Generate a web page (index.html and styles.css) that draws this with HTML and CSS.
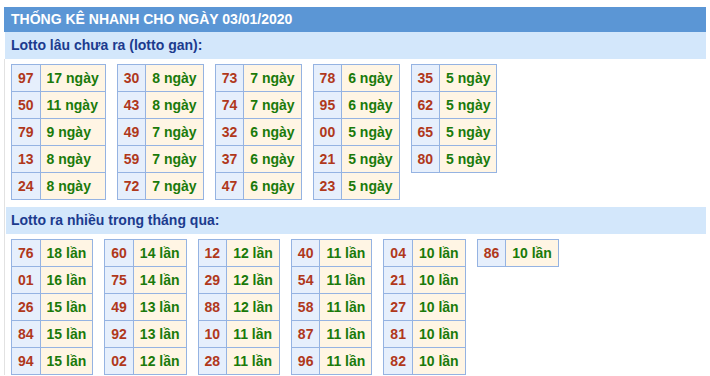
FILE: index.html
```html
<!DOCTYPE html>
<html lang="vi">
<head>
<meta charset="utf-8">
<title>Thống kê nhanh</title>
<link rel="stylesheet" href="styles.css">
</head>
<body>
<div class="box">
  <div class="title">THỐNG KÊ NHANH CHO NGÀY 03/01/2020</div>
  <div class="sub first">Lotto lâu chưa ra (lotto gan):</div>
  <div class="body">
    <div class="tables">
      <table><tr><td class="n">97</td><td class="v">17 ngày</td></tr><tr><td class="n">50</td><td class="v">11 ngày</td></tr><tr><td class="n">79</td><td class="v">9 ngày</td></tr><tr><td class="n">13</td><td class="v">8 ngày</td></tr><tr><td class="n">24</td><td class="v">8 ngày</td></tr></table>
      <table><tr><td class="n">30</td><td class="v">8 ngày</td></tr><tr><td class="n">43</td><td class="v">8 ngày</td></tr><tr><td class="n">49</td><td class="v">7 ngày</td></tr><tr><td class="n">59</td><td class="v">7 ngày</td></tr><tr><td class="n">72</td><td class="v">7 ngày</td></tr></table>
      <table><tr><td class="n">73</td><td class="v">7 ngày</td></tr><tr><td class="n">74</td><td class="v">7 ngày</td></tr><tr><td class="n">32</td><td class="v">6 ngày</td></tr><tr><td class="n">37</td><td class="v">6 ngày</td></tr><tr><td class="n">47</td><td class="v">6 ngày</td></tr></table>
      <table><tr><td class="n">78</td><td class="v">6 ngày</td></tr><tr><td class="n">95</td><td class="v">6 ngày</td></tr><tr><td class="n">00</td><td class="v">5 ngày</td></tr><tr><td class="n">21</td><td class="v">5 ngày</td></tr><tr><td class="n">23</td><td class="v">5 ngày</td></tr></table>
      <table><tr><td class="n">35</td><td class="v">5 ngày</td></tr><tr><td class="n">62</td><td class="v">5 ngày</td></tr><tr><td class="n">65</td><td class="v">5 ngày</td></tr><tr><td class="n">80</td><td class="v">5 ngày</td></tr></table>
    </div>
    <div class="sub second">Lotto ra nhiều trong tháng qua:</div>
    <div class="tables">
      <table><tr><td class="n">76</td><td class="v">18 lần</td></tr><tr><td class="n">01</td><td class="v">16 lần</td></tr><tr><td class="n">26</td><td class="v">15 lần</td></tr><tr><td class="n">84</td><td class="v">15 lần</td></tr><tr><td class="n">94</td><td class="v">15 lần</td></tr></table>
      <table><tr><td class="n">60</td><td class="v">14 lần</td></tr><tr><td class="n">75</td><td class="v">14 lần</td></tr><tr><td class="n">49</td><td class="v">13 lần</td></tr><tr><td class="n">92</td><td class="v">13 lần</td></tr><tr><td class="n">02</td><td class="v">12 lần</td></tr></table>
      <table><tr><td class="n">12</td><td class="v">12 lần</td></tr><tr><td class="n">29</td><td class="v">12 lần</td></tr><tr><td class="n">88</td><td class="v">12 lần</td></tr><tr><td class="n">10</td><td class="v">11 lần</td></tr><tr><td class="n">28</td><td class="v">11 lần</td></tr></table>
      <table><tr><td class="n">40</td><td class="v">11 lần</td></tr><tr><td class="n">54</td><td class="v">11 lần</td></tr><tr><td class="n">58</td><td class="v">11 lần</td></tr><tr><td class="n">87</td><td class="v">11 lần</td></tr><tr><td class="n">96</td><td class="v">11 lần</td></tr></table>
      <table><tr><td class="n">04</td><td class="v">10 lần</td></tr><tr><td class="n">21</td><td class="v">10 lần</td></tr><tr><td class="n">27</td><td class="v">10 lần</td></tr><tr><td class="n">81</td><td class="v">10 lần</td></tr><tr><td class="n">82</td><td class="v">10 lần</td></tr></table>
      <table><tr><td class="n">86</td><td class="v">10 lần</td></tr></table>
    </div>
  </div>
</div>
</body>
</html>
```
FILE: styles.css
```css
html, body {
  margin: 0;
  padding: 0;
  background: #ffffff;
}
body {
  padding: 7px 4px 0 4px;
  font-family: "Liberation Sans", Arial, sans-serif;
  font-weight: bold;
  font-size: 14px;
}
.box {
  width: 702px;
}
.title {
  height: 25px;
  line-height: 25px;
  background: #5b96d5;
  color: #ffffff;
  padding-left: 7px;
}
.sub {
  height: 27px;
  line-height: 27px;
  background: #d3e7fb;
  color: #1c3b8e;
  padding-left: 6px;
}
.sub.first {
  margin-left: 1px;
}
.sub.second {
  margin: 7px 0 5px 1px;
  padding-left: 5px;
}
.body {
  border-left: 1px solid #e2e2e2;
}
.tables {
  display: flex;
  align-items: flex-start;
  gap: 11px;
  padding-left: 6px;
}
.sub.first + .body .tables:first-child {
  padding-top: 5px;
}
table {
  border-collapse: collapse;
}
td {
  border: 1px solid #95b3e2;
  height: 26px;
  padding: 0 6px;
  white-space: nowrap;
}
td.n {
  background: #e6effc;
  color: #b0381b;
}
td.v {
  background: #fff5e4;
  color: #1a7a0a;
}
```
